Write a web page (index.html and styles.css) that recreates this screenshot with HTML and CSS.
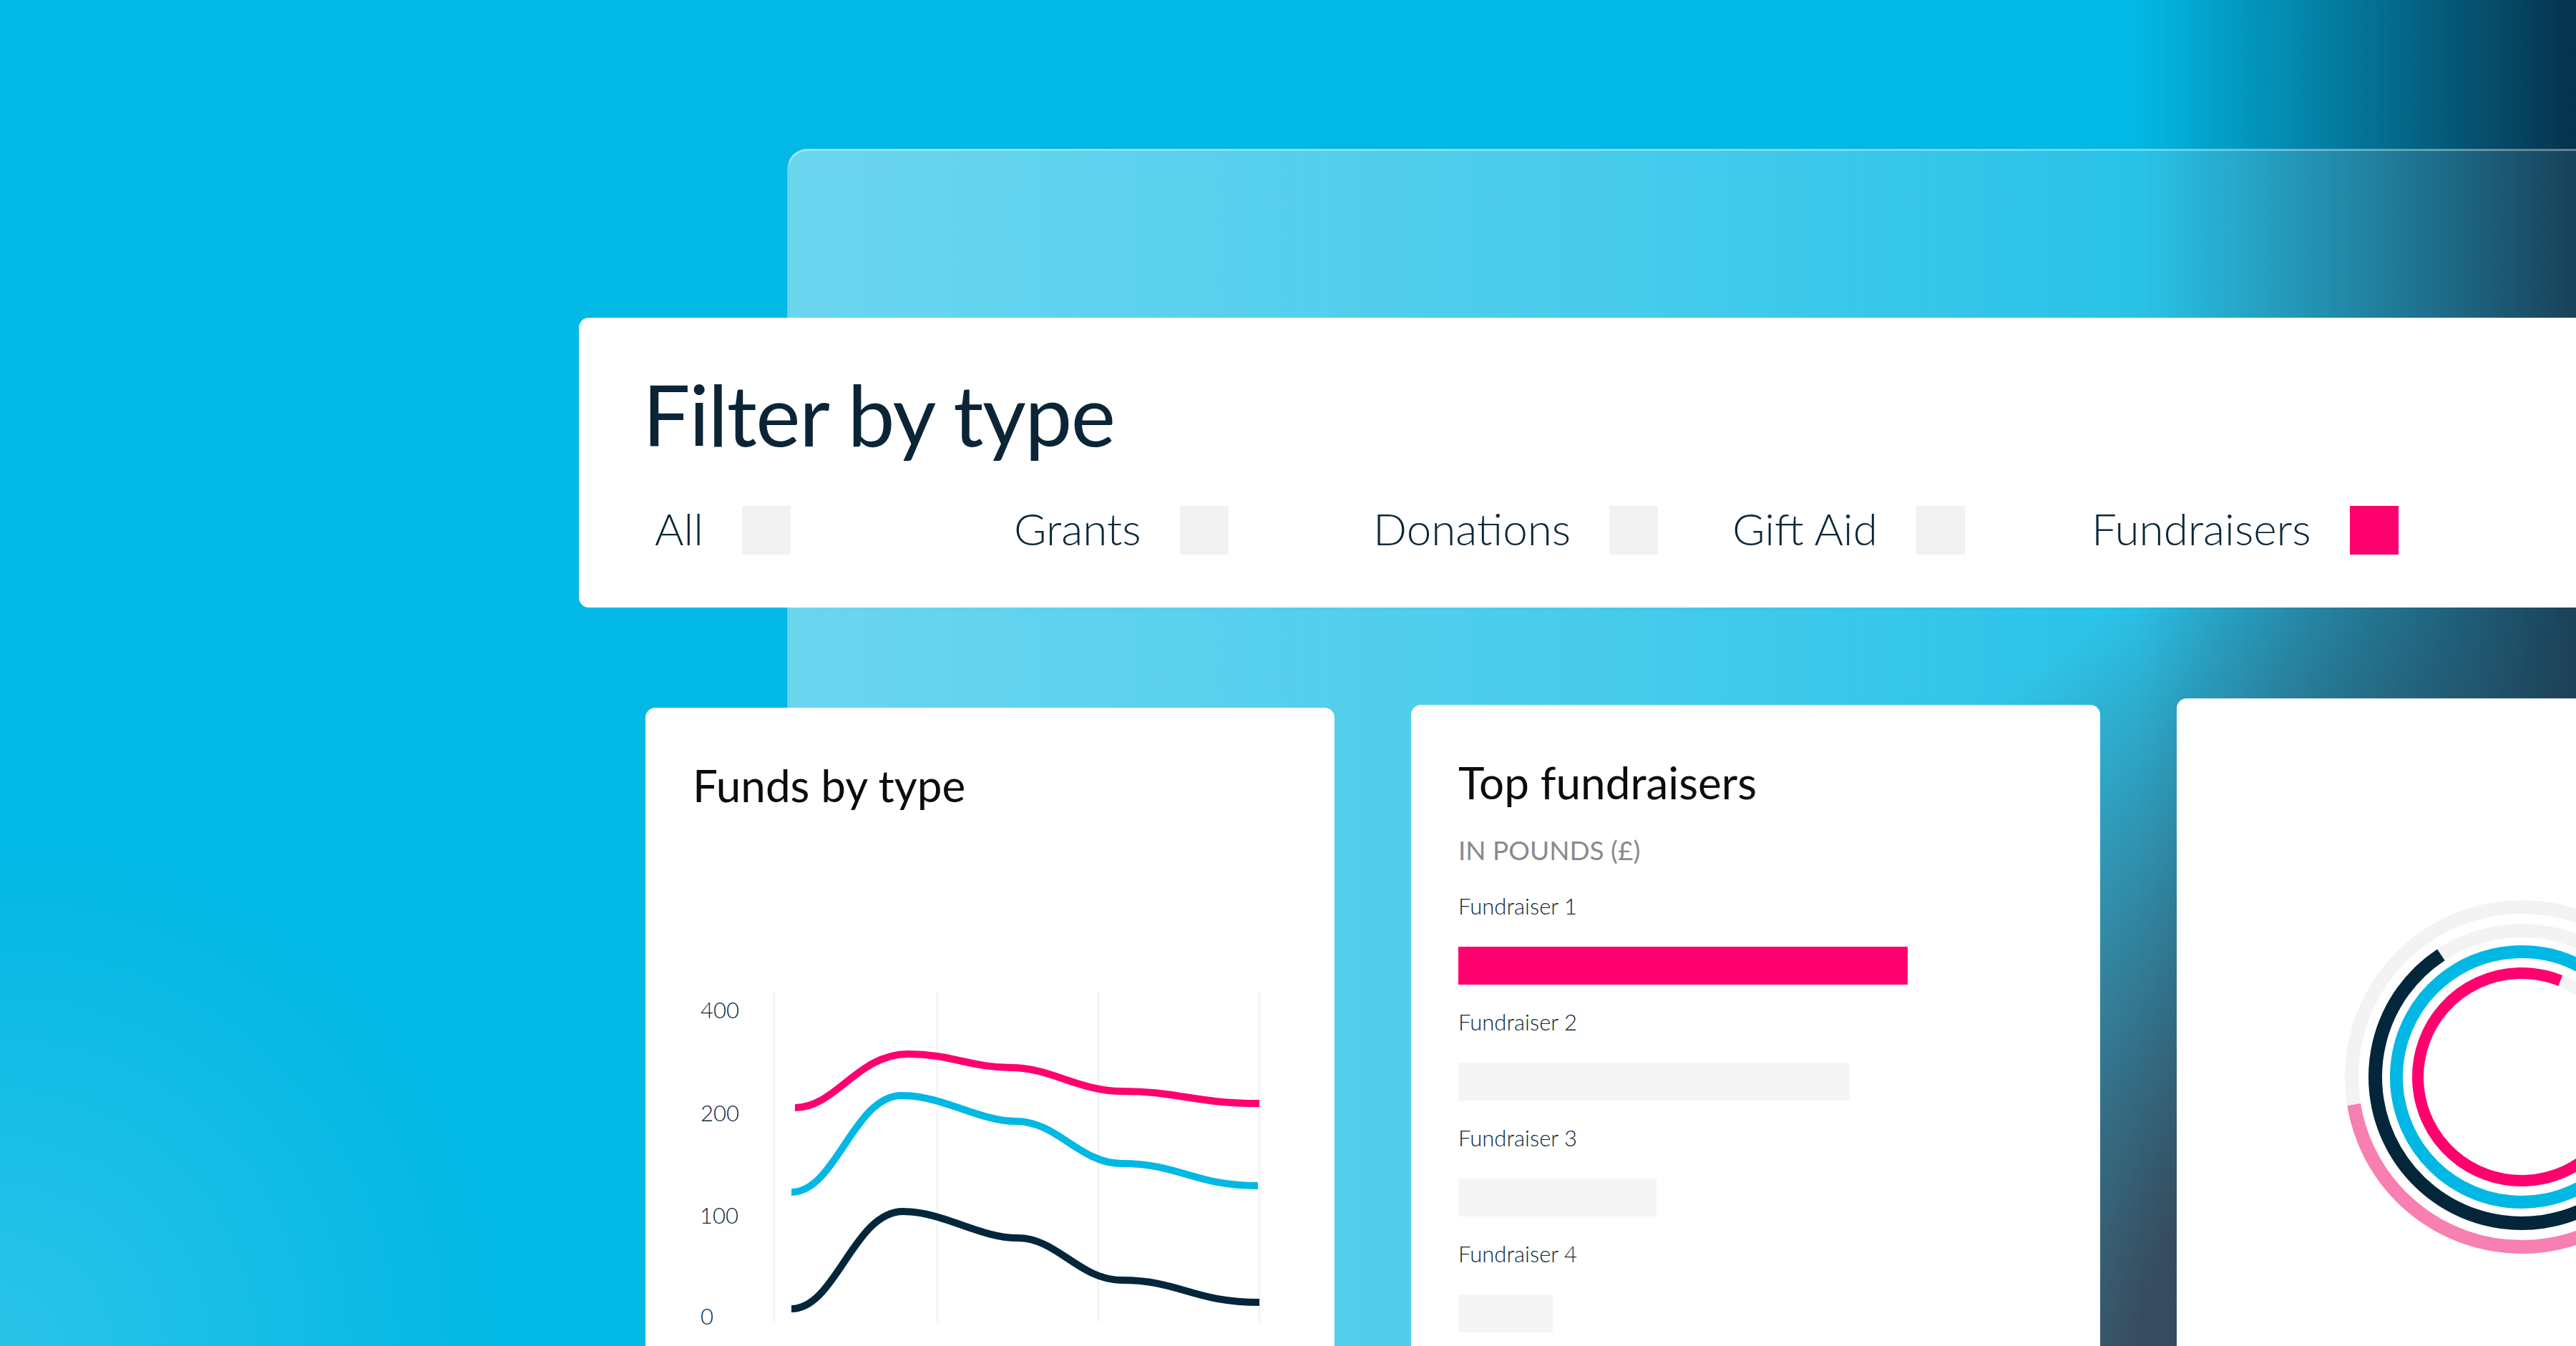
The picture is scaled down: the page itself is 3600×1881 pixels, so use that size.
FILE: index.html
```html
<!DOCTYPE html>
<html>
<head>
  <title>Dashboard</title>
  <link rel="stylesheet" href="styles.css">
</head>
<body>
  <div class="page">
    <div class="glass">
      <section class="filter">
        <h1 class="filter-title">Filter by type</h1>
        <div class="types">
          <div class="type"><span>All</span><span class="check"></span></div>
          <div class="type"><span>Grants</span><span class="check"></span></div>
          <div class="type"><span>Donations</span><span class="check"></span></div>
          <div class="type"><span>Gift Aid</span><span class="check"></span></div>
          <div class="type"><span>Fundraisers</span><span class="check on"></span></div>
        </div>
      </section>

      <div class="cards">
        <section class="card card-funds">
          <h2 class="card-title">Funds by type</h2>
          <svg class="line-chart" width="860" height="520" viewBox="0 0 860 520">
            <!-- grid -->
            <line class="grid" x1="114" y1="6" x2="114" y2="467"></line>
            <line class="grid" x1="342" y1="6" x2="342" y2="467"></line>
            <line class="grid" x1="567" y1="6" x2="567" y2="467"></line>
            <line class="grid" x1="792" y1="6" x2="792" y2="467"></line>
            <!-- axis -->
            <text class="axis" x="11" y="43">400</text>
            <text class="axis" x="11" y="187">200</text>
            <text class="axis" x="10" y="330">100</text>
            <text class="axis" x="11" y="471">0</text>
            <!-- series -->
            <path class="series pink" d="M143,168 C200,168 230,93 301,93 C360,93 390,112 445,112 C500,112 540,145 600,145 C680,145 700,162 792,162"></path>
            <path class="series cyan" d="M138,286 C200,286 225,151 292,151 C350,151 400,187 452,187 C510,187 540,246 600,246 C680,246 700,277 790,277"></path>
            <path class="series navy" d="M138,449 C200,449 225,313 294,313 C350,313 400,350 454,350 C510,350 540,409 600,409 C680,409 700,440 792,440"></path>
          </svg>
        </section>

        <section class="card card-top">
          <h2 class="card-title">Top fundraisers</h2>
          <div class="unit">IN POUNDS (£)</div>
          <div class="bars">
            <div class="bar-row">
              <div class="bar-label">Fundraiser 1</div>
              <div class="bar lead" style="width: 628px"></div>
            </div>
            <div class="bar-row">
              <div class="bar-label">Fundraiser 2</div>
              <div class="bar" style="width: 547px"></div>
            </div>
            <div class="bar-row">
              <div class="bar-label">Fundraiser 3</div>
              <div class="bar" style="width: 277px"></div>
            </div>
            <div class="bar-row">
              <div class="bar-label">Fundraiser 4</div>
              <div class="bar" style="width: 132px"></div>
            </div>
          </div>
        </section>

        <section class="card card-rings">
          <svg class="rings" width="600" height="600" viewBox="0 0 600 600">
            <circle class="track" cx="300" cy="300" r="237.5" stroke-width="19"></circle>
            <circle cx="300" cy="300" r="237.5" stroke="#f77fb1" stroke-width="19" stroke-dasharray="707 2000"></circle>

            <circle class="track" cx="300" cy="300" r="204.5" stroke-width="19"></circle>
            <circle cx="300" cy="300" r="204.5" stroke="#03263a" stroke-width="19" stroke-dasharray="951 2000" transform="rotate(-30 300 300)"></circle>

            <circle cx="300" cy="300" r="175" stroke="#00b8e3" stroke-width="18" stroke-dasharray="1038 2000" transform="rotate(-40 300 300)"></circle>

            <circle class="track" cx="300" cy="300" r="145" stroke-width="16"></circle>
            <circle cx="300" cy="300" r="145" stroke="#ff006e" stroke-width="16" stroke-dasharray="688 2000" transform="rotate(20 300 300)"></circle>
          </svg>
        </section>
      </div>
    </div>
  </div>
</body>
</html>
```

FILE: styles.css
```css
html, body {
  margin: 0;
  padding: 0;
}

body {
  width: 3600px;
  height: 1881px;
  overflow: hidden;
  font-family: Lato, "Noto Sans", sans-serif;
  color: #0b2739;
  background:
    radial-gradient(circle 700px at 0 100%, rgba(255, 255, 255, 0.16), rgba(255, 255, 255, 0)),
    radial-gradient(ellipse 1000px 1400px at 3400px 2100px, rgba(18, 44, 66, 1) 0%, rgba(18, 44, 66, 1) 45%, rgba(18, 44, 66, 0) 100%),
    linear-gradient(to right, rgba(6, 50, 76, 0) 83%, rgba(6, 50, 76, 1) 100%),
    #02b8e4;
}

.page {
  padding: 208px 0 0 1100px;
}

.glass {
  min-height: 1800px;
  padding-top: 233px;
  border-top: 3px solid rgba(255, 255, 255, 0.32);
  border-left: 3px solid rgba(255, 255, 255, 0.32);
  border-top-left-radius: 28px;
  background: linear-gradient(to right, rgba(255, 255, 255, 0.42), rgba(255, 255, 255, 0.28) 45%, rgba(255, 255, 255, 0.16) 75%, rgba(255, 255, 255, 0.08) 100%);
}

/* filter bar */

.filter {
  width: 2900px;
  margin-left: -294px;
  padding: 76px 0 74px 89px;
  box-sizing: border-box;
  background: #fff;
  border-radius: 14px;
}

.filter-title {
  margin: 0;
  font-size: 118px;
  line-height: 1;
  font-weight: 400;
  letter-spacing: -1.6px;
  color: #0b2537;
}

.types {
  display: grid;
  grid-template-columns: repeat(5, 502px);
  margin-top: 69px;
  padding-left: 17px;
}

.type {
  display: flex;
  align-items: flex-start;
  gap: 54px;
  font-size: 62px;
  line-height: 1;
  font-weight: 300;
}

.check {
  width: 68px;
  height: 68px;
  background: #f2f2f2;
}

.check.on {
  background: #ff006e;
}

/* cards */

.cards {
  display: flex;
  align-items: flex-start;
  gap: 107px;
  margin-left: -201px;
  margin-top: 127px;
}

.card {
  flex: none;
  width: 963px;
  min-height: 1000px;
  box-sizing: border-box;
  padding: 77px 0 0 66px;
  background: #fff;
  border-radius: 14px;
}

.card-funds {
  margin-top: 13px;
}

.card-top {
  margin-top: 9px;
}

.card-title {
  margin: 0;
  font-size: 62px;
  line-height: 1;
  font-weight: 400;
  color: #0c0c0c;
}

.line-chart {
  display: block;
  margin-top: 252px;
}

.grid {
  stroke: #f1f1f1;
  stroke-width: 2;
}

.axis {
  font-family: Lato, "Noto Sans", sans-serif;
  font-size: 31px;
  font-weight: 300;
  fill: #0b2739;
}

.series {
  fill: none;
  stroke-width: 10;
}

.series.pink {
  stroke: #ff006e;
}

.series.cyan {
  stroke: #00b8e3;
}

.series.navy {
  stroke: #03263a;
}

.unit {
  margin-top: 45px;
  font-size: 37px;
  line-height: 1;
  color: #8a8a8a;
}

.bars {
  display: flex;
  flex-direction: column;
  gap: 37px;
  margin-top: 45px;
}

.bar-label {
  font-size: 31px;
  line-height: 1;
  font-weight: 300;
}

.bar {
  height: 53px;
  margin-top: 41px;
  background: #f5f5f5;
}

.bar.lead {
  background: #ff006e;
}

.card-rings {
  padding: 229px 0 0 0;
}

.rings {
  display: block;
  margin: 0 auto;
}

.rings circle {
  fill: none;
}

.rings .track {
  stroke: #f3f3f3;
}
```
